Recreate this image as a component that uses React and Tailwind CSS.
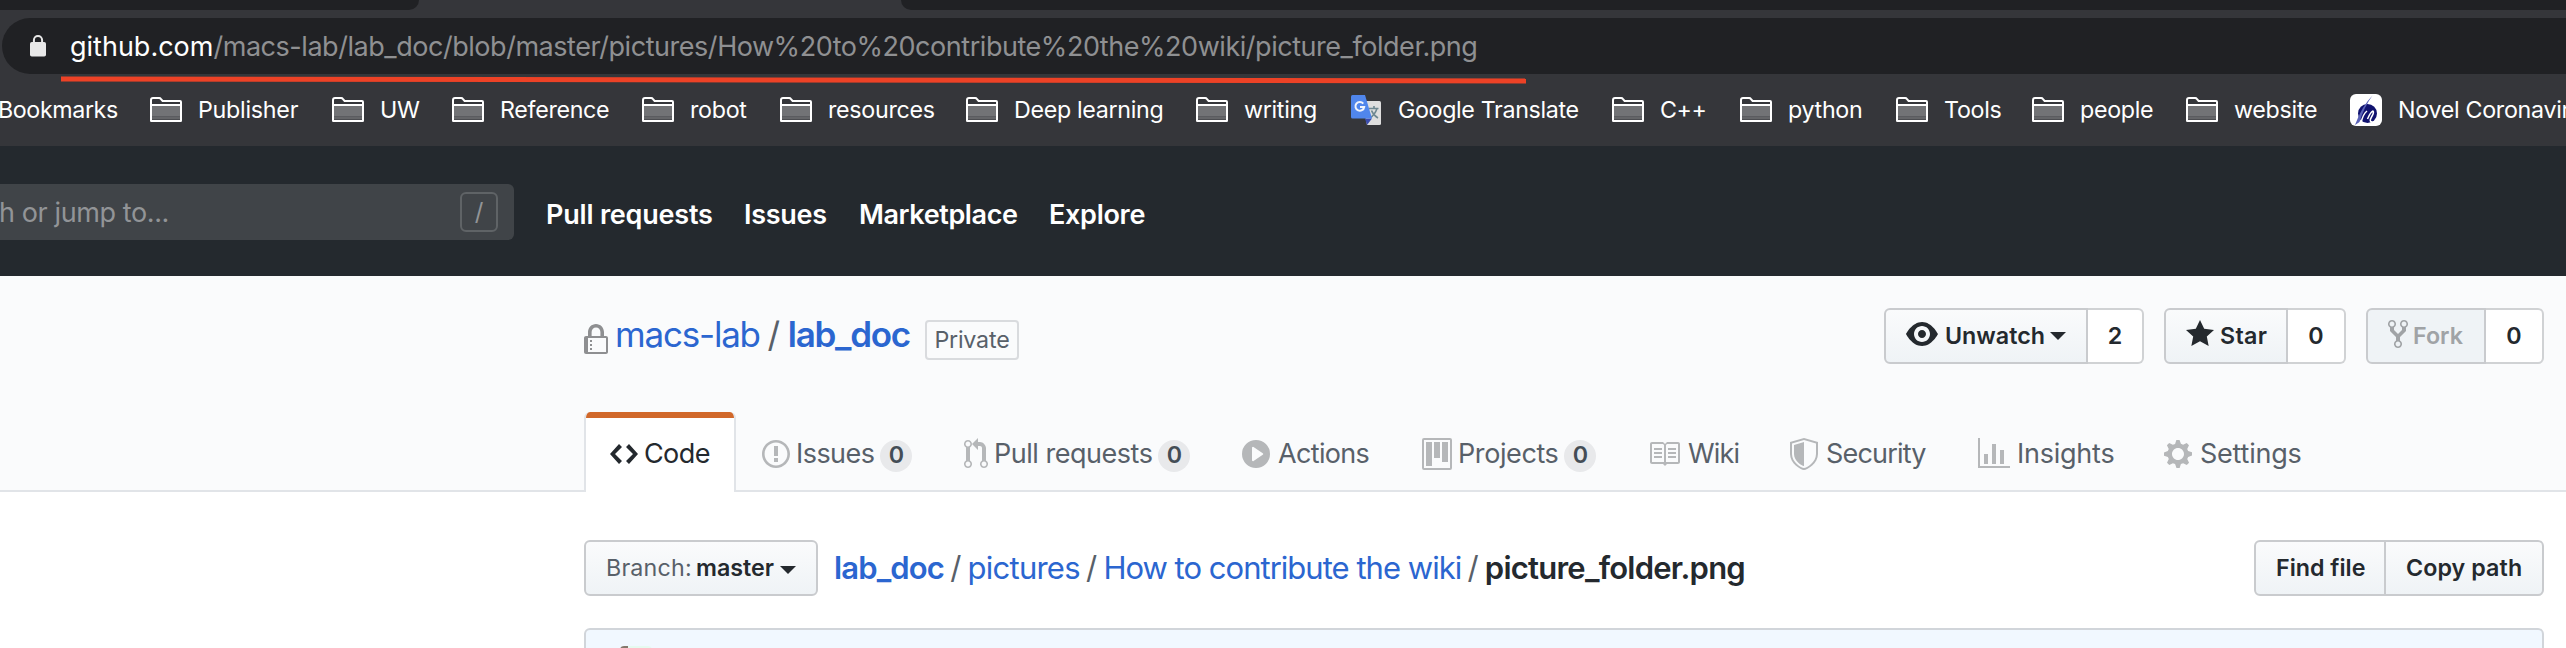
import React from 'react';

const OCTICONS = {
  lock: [12, 'M4 13H3v-1h1v1zm8-6v7c0 .55-.45 1-1 1H1c-.55 0-1-.45-1-1V7c0-.55.45-1 1-1h1V4c0-2.2 1.8-4 4-4s4 1.8 4 4v2h1c.55 0 1 .45 1 1zM3.8 6h4.41V4c0-1.22-.98-2.2-2.2-2.2-1.22 0-2.2.98-2.2 2.2v2H3.8zM11 7H2v7h9V7zM4 8H3v1h1V8zm0 2H3v1h1v-1z'],
  eye: [16, 'M8.06 2C3 2 0 8 0 8s3 6 8.06 6C13 14 16 8 16 8s-3-6-7.94-6zM8 12c-2.2 0-4-1.78-4-4 0-2.2 1.8-4 4-4 2.22 0 4 1.8 4 4 0 2.22-1.78 4-4 4zm2-4c0 1.11-.89 2-2 2-1.11 0-2-.89-2-2 0-1.11.89-2 2-2 1.11 0 2 .89 2 2z'],
  star: [14, 'M14 6l-4.9-.64L7 1 4.9 5.36 0 6l3.6 3.26L2.67 14 7 11.67 11.33 14l-.93-4.74L14 6z'],
  fork: [10, 'M8 1a1.993 1.993 0 00-1 3.72V6L5 8 3 6V4.72A1.993 1.993 0 002 1a1.993 1.993 0 00-1 3.72V6.5l3 3v1.78A1.993 1.993 0 005 15a1.993 1.993 0 001-3.72V9.5l3-3V4.72A1.993 1.993 0 008 1zM2 4.2C1.34 4.2.8 3.65.8 3c0-.65.55-1.2 1.2-1.2.65 0 1.2.55 1.2 1.2 0 .65-.55 1.2-1.2 1.2zm3 10c-.66 0-1.2-.55-1.2-1.2 0-.65.55-1.2 1.2-1.2.65 0 1.2.55 1.2 1.2 0 .65-.55 1.2-1.2 1.2zm3-10c-.66 0-1.2-.55-1.2-1.2 0-.65.55-1.2 1.2-1.2.65 0 1.2.55 1.2 1.2 0 .65-.55 1.2-1.2 1.2z'],
  code: [14, 'M9.5 3L8 4.5 11.5 8 8 11.5 9.5 13 14 8 9.5 3zm-5 0L0 8l4.5 5L6 11.5 2.5 8 6 4.5 4.5 3z'],
  issue: [14, 'M7 2.3c3.14 0 5.7 2.56 5.7 5.7s-2.56 5.7-5.7 5.7A5.71 5.71 0 011.3 8c0-3.14 2.56-5.7 5.7-5.7zM7 1C3.14 1 0 4.14 0 8s3.14 7 7 7 7-3.14 7-7-3.14-7-7-7zm1 3H6v5h2V4zm0 6H6v2h2v-2z'],
  pull: [12, 'M11 11.28V5c-.03-.78-.34-1.47-.94-2.06C9.46 2.35 8.78 2.03 8 2H7V0L4 3l3 3V4h1c.27.02.48.11.69.31.21.2.3.42.31.69v6.28A1.993 1.993 0 0010 15a1.993 1.993 0 001-3.72zm-1 2.92c-.66 0-1.2-.55-1.2-1.2 0-.65.55-1.2 1.2-1.2.65 0 1.2.55 1.2 1.2 0 .65-.55 1.2-1.2 1.2zM4 3c0-1.11-.89-2-2-2a1.993 1.993 0 00-1 3.72v6.56A1.993 1.993 0 002 15a1.993 1.993 0 001-3.72V4.72c.59-.34 1-.98 1-1.72zm-.8 10c0 .66-.55 1.2-1.2 1.2-.65 0-1.2-.55-1.2-1.2 0-.65.55-1.2 1.2-1.2.65 0 1.2.55 1.2 1.2zM2 4.2C1.34 4.2.8 3.65.8 3c0-.65.55-1.2 1.2-1.2.65 0 1.2.55 1.2 1.2 0 .65-.55 1.2-1.2 1.2z'],
  play: [14, 'M14 8A7 7 0 110 8a7 7 0 0114 0zm-8.223 3.482l4.599-3.066a.5.5 0 000-.832L5.777 4.518A.5.5 0 005 4.934v6.132a.5.5 0 00.777.416z'],
  project: [15, 'M10 12h3V2h-3v10zm-4-2h3V2H6v8zm-4 4h3V2H2v12zm-1 1h13V1H1v14zM14 0H1a1 1 0 00-1 1v14a1 1 0 001 1h13a1 1 0 001-1V1a1 1 0 00-1-1z'],
  book: [16, 'M3 5h4v1H3V5zm0 3h4V7H3v1zm0 2h4V9H3v1zm11-5h-4v1h4V5zm0 2h-4v1h4V7zm0 2h-4v1h4V9zm2-6v9c0 .55-.45 1-1 1H9.5l-1 1-1-1H2c-.55 0-1-.45-1-1V3c0-.55.45-1 1-1h5.5l1 1 1-1H15c.55 0 1 .45 1 1zm-8 .5L7.5 3H2v9h6V3.5zm7-.5H9.5l-.5.5V12h6V3z'],
  shield: [14, 'M0 2l7-2 7 2v6.02C14 12.69 8.69 16 7 16c-1.69 0-7-3.31-7-7.98V2zm1 .75L7 1l6 1.75v5.268C13 12.104 8.449 15 7 15c-1.449 0-6-2.896-6-6.982V2.75zm1 .75L7 2v12c-1.207 0-5-2.482-5-5.985V3.5z'],
  graph: [16, 'M16 14v1H0V0h1v14h15zM5 13H3V8h2v5zm4 0H7V3h2v10zm4 0h-2V6h2v7z'],
  gear: [14, 'M14 8.77v-1.6l-1.94-.64-.45-1.09.88-1.84-1.13-1.13-1.81.91-1.09-.45-.69-1.92h-1.6l-.63 1.94-1.11.45-1.84-.88-1.13 1.13.91 1.81-.45 1.09L0 7.23v1.59l1.94.64.45 1.09-.88 1.84 1.13 1.13 1.81-.91 1.09.45.69 1.92h1.59l.63-1.94 1.11-.45 1.84.88 1.13-1.13-.92-1.81.47-1.09L14 8.75v.02zM7 11c-1.66 0-3-1.34-3-3s1.34-3 3-3 3 1.34 3 3-1.34 3-3 3z'],
};

function Octicon({ name, className = '' }) {
  const [w, d] = OCTICONS[name];
  return (
    <svg className={`shrink-0 ${className}`} width={w * 2} height="32" viewBox={`0 0 ${w} 16`} fill="currentColor">
      <path fillRule="evenodd" d={d} />
    </svg>
  );
}

function FolderIcon() {
  return (
    <svg className="shrink-0" width="32" height="26" viewBox="0 0 32 26">
      <path d="M2 8h28v11.5H2z" fill="#727376" />
      <path d="M2 19.5h28v3H2z" fill="#646568" />
      <path d="M1 23.7V3Q1 1 3 1h6.2q1 0 1.6.9L12.6 4H30q1 0 1 1v18.7q0 .3-.3.3H1.3q-.3 0-.3-.3zM1 8h30" fill="none" stroke="#fff" strokeWidth="2" />
    </svg>
  );
}

function TranslateIcon() {
  return (
    <svg className="shrink-0" width="32" height="32" viewBox="0 0 32 32">
      <path d="M12 7h17.500q1.500 0 1.500 1.500v21q0 1.500-1.500 1.500H17z" fill="#dedede" />
      <path d="M19 14.500h9.500M24 12v2.500M27 14.500q-2 6-7 9.500M21.500 16.500q2 5 6.500 7.500" fill="none" stroke="#6d8790" strokeWidth="1.600" />
      <path d="M15 24.500h7L17 31z" fill="#3a4cae" />
      <path d="M2.500 1H15l7 23.500H2.500Q1 24.500 1 23V2.500Q1 1 2.500 1z" fill="#5086ec" />
      <path d="M13.300 9.600A4.400 4.400 0 1 0 14.200 13H10" fill="none" stroke="#f1f4fb" strokeWidth="2" />
    </svg>
  );
}

function NovelIcon() {
  return (
    <svg className="shrink-0" width="32" height="32" viewBox="0 0 32 32">
      <rect width="32" height="32" rx="6" fill="#fff" />
      <ellipse cx="17.500" cy="19.500" rx="9.500" ry="9.500" fill="#10126f" />
      <path d="M11 29Q13 20 17 17M17.500 25q3-7 5.500-8 1.500 1-1.500 6t1 5" fill="none" stroke="#fff" strokeWidth="1.500" />
      <path d="M22.500 1.500Q12 12 5 31L9.500 28Q14 13 22.500 1.500z" fill="#5a62b8" />
    </svg>
  );
}

const bookmarks = [
  ['Publisher', 'w-[182px]', 'tracking-[-0.25px]'],
  ['UW', 'w-[120px]', 'tracking-[-0.4px]'],
  ['Reference', 'w-[190px]', 'tracking-[-0.32px]'],
  ['robot', 'w-[138px]', 'tracking-[-0.3px]'],
  ['resources', 'w-[186px]', 'tracking-[-0.3px]'],
  ['Deep learning', 'w-[230px]', 'tracking-[-0.32px]'],
  ['writing', 'w-[154px]', 'tracking-[-0.3px]'],
  ['Google Translate', 'w-[262px]', 'tracking-[-0.35px]', TranslateIcon],
  ['C++', 'w-[128px]', 'tracking-[-0.38px]'],
  ['python', 'w-[156px]', 'tracking-[-0.3px]'],
  ['Tools', 'w-[136px]', 'tracking-[-0.3px]'],
  ['people', 'w-[154px]', 'tracking-[-0.3px]'],
  ['website', 'w-[164px]', 'tracking-[-0.28px]'],
  ['Novel Coronavirus', 'w-[300px]', 'tracking-[-0.3px]', NovelIcon],
];

function BrowserChrome() {
  return (
    <div className="relative h-[146px] overflow-hidden bg-[#35363a]">
      <div className="flex h-[10px] justify-between">
        <div className="w-[419px] rounded-br-[12px] bg-[#202124]" />
        <div className="w-[1665px] rounded-bl-[12px] bg-[#202124]" />
      </div>
      <div className="mt-2 ml-0.5 flex h-14 items-center rounded-l-full bg-[#202124] pl-7">
        <svg className="mb-px shrink-0" width="16" height="22" viewBox="0 0 16 22">
          <path d="M3.900 8V5.100a4.100 4.100 0 0 1 8.200 0V8" fill="none" stroke="#e8e8e8" strokeWidth="2" />
          <rect y="7" width="16" height="14.500" rx="1.800" fill="#e8e8e8" />
        </svg>
        <div className="mt-0.5 ml-[24px] text-[27px] leading-8 tracking-[-0.46px] whitespace-nowrap text-[#8f9092]">
          <span className="tracking-[0px] text-white">github.com</span>
          /macs-lab/lab_doc/blob/master/pictures/How%20to%20contribute%20the%20wiki/picture_folder.png
        </div>
      </div>
      <div className="flex h-[72px] items-center text-[23.250px] leading-8 whitespace-nowrap text-white">
        <div className="-ml-[2px] w-[152px] shrink-0 tracking-[-0.4px]">Bookmarks</div>
        {bookmarks.map(([label, width, tracking, Icon = FolderIcon]) => (
          <div key={label} className={`flex shrink-0 items-center gap-4 ${width}`}>
            <Icon />
            <span className={tracking}>{label}</span>
          </div>
        ))}
      </div>
      <svg className="absolute top-[74px] left-[61px]" width="1465" height="12" viewBox="0 0 1465 12">
        <path d="M0 5l1465 1.900" stroke="#ed4226" strokeWidth="5" />
      </svg>
    </div>
  );
}

function SiteHeader() {
  return (
    <header className="flex h-[130px] items-start bg-[#24292e] pt-[38px] text-[27px] whitespace-nowrap">
      <div className="flex h-14 w-[514px] items-center justify-between rounded-r-md bg-[#404448] pr-4">
        <span className="mt-0.5 -ml-px tracking-[-0.4px] text-[#929497]">h or jump to...</span>
        <span className="flex h-10 w-[38px] items-center justify-center rounded-md border-2 border-[#5f6366] text-2xl text-[#929497]">/</span>
      </div>
      <nav className="mt-[3px] flex h-14 items-center pl-8 font-semibold text-white">
        <span className="w-[198px] tracking-[-0.2px]">Pull requests</span>
        <span className="w-[115px] tracking-[-0.3px]">Issues</span>
        <span className="w-[190px] tracking-[-0.4px]">Marketplace</span>
        <span className="tracking-[-0.3px]">Explore</span>
      </nav>
    </header>
  );
}

function Caret({ className }) {
  return <span className={`h-0 w-0 shrink-0 border-x-8 border-t-8 border-x-transparent border-t-[#24292e] ${className}`} />;
}

const tabs = [
  ['issue', 'Issues', 'w-[202px] gap-[6px]', 'tracking-[-0.55px]', '0'],
  ['pull', 'Pull requests', 'w-[278px] gap-[6px]', 'tracking-[-0.48px]', '0'],
  ['play', 'Actions', 'w-[180px] gap-[8px]', 'tracking-[-0.66px]'],
  ['project', 'Projects', 'w-[226px] gap-[6px]', 'tracking-[-0.4px]', '0'],
  ['book', 'Wiki', 'w-[142px] gap-[8px]', 'tracking-[-0.82px]'],
  ['shield', 'Security', 'w-[188px] gap-[8px]', 'tracking-[-0.8px]'],
  ['graph', 'Insights', 'w-[186px] gap-[7px]', 'tracking-[-0.24px]'],
  ['gear', 'Settings', 'w-[160px] gap-[8px]', 'tracking-[-0.23px]'],
];

function RepoHead() {
  return (
    <div className="h-[216px] border-b-2 border-[#e1e4e8] bg-[#fafbfc] pt-8 pr-[22px] pl-[584px] whitespace-nowrap">
      <div className="flex h-14 items-center justify-between">
        <h1 className="flex h-14 items-center text-[35px] text-[#2b66d0]">
          <Octicon name="lock" className="mt-2 text-[#8e8f91]" />
          <span className="mb-[3px] ml-[7px] tracking-[-1.2px]">macs-lab</span>
          <span className="mb-[3px] w-7 text-center text-[#586069]">/</span>
          <span className="mb-[3px] font-semibold tracking-[-1.28px]">lab_doc</span>
          <span className="mt-2 ml-[15px] flex h-10 w-[94px] items-center justify-center rounded-[4px] border-2 border-[#d9dbde] text-[23.250px] tracking-[-0.2px] text-[#586069]">
            Private
          </span>
        </h1>
        <div className="flex gap-5 text-[23.250px] font-semibold text-[#24292e]">
          <div className="flex h-14">
            <div className="flex w-[204px] items-center rounded-l-md border-2 border-[#c9cbce] bg-linear-to-b from-[#fafbfc] to-[#eff3f6] pl-5">
              <Octicon name="eye" className="mb-1" />
              <span className="ml-[7px]">Unwatch</span>
              <Caret className="ml-[5px]" />
            </div>
            <div className="flex w-14 items-center justify-center rounded-r-md border-2 border-l-0 border-[#d0d2d4] bg-white">2</div>
          </div>
          <div className="flex h-14">
            <div className="flex w-[124px] items-center rounded-l-md border-2 border-[#c9cbce] bg-linear-to-b from-[#fafbfc] to-[#eff3f6] pl-5">
              <Octicon name="star" className="mb-1" />
              <span className="ml-[6px] tracking-[0.3px]">Star</span>
            </div>
            <div className="flex w-[58px] items-center justify-center rounded-r-md border-2 border-l-0 border-[#d0d2d4] bg-white">0</div>
          </div>
          <div className="flex h-14">
            <div className="flex w-[120px] items-center rounded-l-md border-2 border-[#c9cbce] bg-[#eff3f6] pl-5 text-[#a0a3a6]">
              <Octicon name="fork" className="mb-1" />
              <span className="ml-[5px]">Fork</span>
            </div>
            <div className="flex w-[58px] items-center justify-center rounded-r-md border-2 border-l-0 border-[#d0d2d4] bg-white">0</div>
          </div>
        </div>
      </div>
      <nav className="mt-12 flex h-20 text-[27px] text-[#586069]">
        <div className="mr-[26px] flex w-[152px] shrink-0 flex-col overflow-hidden rounded-t-md border-x-2 border-[#e1e4e8] bg-white text-[#24292e]">
          <div className="-mx-px h-[6px] bg-[#d1682a]" />
          <div className="flex grow items-center gap-[6px] pb-[2px] pl-6">
            <Octicon name="code" />
            <span className="tracking-[-0.6px]">Code</span>
          </div>
        </div>
        {tabs.map(([icon, label, box, tracking, count]) => (
          <div key={label} className={`flex shrink-0 items-center pt-1 ${box}`}>
            <Octicon name={icon} className="text-[#b5b7b9]" />
            <span className={`mt-px ${tracking}`}>{label}</span>
            {count && (
              <span className="mt-1 flex h-8 w-8 items-center justify-center rounded-full bg-[#e8e9eb] pb-0.5 text-[23.250px] font-semibold text-[#444d56]">
                {count}
              </span>
            )}
          </div>
        ))}
      </nav>
    </div>
  );
}

function Separator() {
  return <span className="w-[23.600px] text-center text-[#586069]">/</span>;
}

function FileArea() {
  return (
    <main className="flex flex-col pt-12 pr-[22px] pl-[584px] whitespace-nowrap">
      <div className="flex h-14 items-center">
        <div className="flex h-14 w-[234px] items-center rounded-md border-2 border-[#c9cbce] bg-linear-to-b from-[#fafbfc] to-[#eff3f6] pl-5 text-[23.250px] text-[#24292e]">
          <span className="w-[90px] tracking-[0.2px] text-[#586069]">Branch:</span>
          <span className="font-semibold">master</span>
          <Caret className="mt-1 ml-[6px]" />
        </div>
        <div className="ml-4 flex items-center text-[31px] text-[#2b66d0]">
          <span className="font-semibold tracking-[-0.87px]">lab_doc</span>
          <Separator />
          <span className="tracking-[-0.76px]">pictures</span>
          <Separator />
          <span className="tracking-[-0.98px]">How to contribute the wiki</span>
          <Separator />
          <span className="font-semibold tracking-[-0.76px] text-[#24292e]">picture_folder.png</span>
        </div>
        <div className="ml-auto flex h-14 text-[23.250px] font-semibold text-[#24292e]">
          <div className="flex w-[132px] items-center rounded-l-md border-2 border-[#c9cbce] bg-linear-to-b from-[#fafbfc] to-[#eff3f6] pl-5">Find file</div>
          <div className="flex w-[158px] items-center rounded-r-md border-2 border-l-0 border-[#c9cbce] bg-linear-to-b from-[#fafbfc] to-[#eff3f6] pl-5 tracking-[0.08px]">Copy path</div>
        </div>
      </div>
      <div className="mt-8 flex h-10 items-start rounded-t-md border-2 border-[#d1d5da] bg-[#f1f8ff] pt-4 pl-[34px]">
        <div className="h-8 w-2 rounded-tl-[4px] bg-[#85786c]" />
        <div className="h-8 w-6 rounded-tr-[4px] bg-[#e6faf0]" />
      </div>
    </main>
  );
}

export default function App() {
  return (
    <div className="h-[648px] w-[2566px] overflow-hidden bg-white font-[Inter,sans-serif]">
      <BrowserChrome />
      <SiteHeader />
      <RepoHead />
      <FileArea />
    </div>
  );
}
